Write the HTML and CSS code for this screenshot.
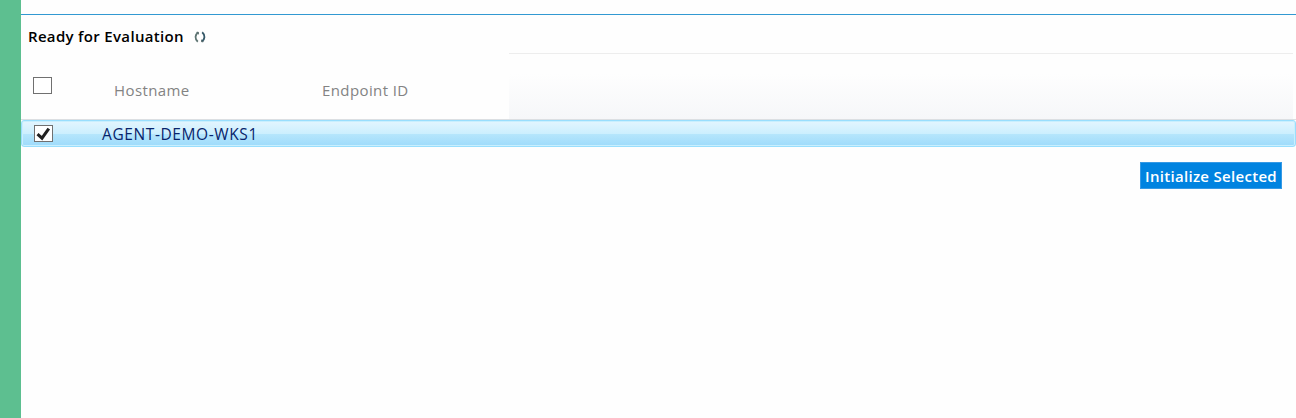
FILE: index.html
```html
<!DOCTYPE html>
<html lang="en">
<head>
<meta charset="utf-8">
<title>Ready for Evaluation</title>
<link rel="stylesheet" href="styles.css">
</head>
<body>
<div class="sidebar"></div>
<main class="panel">
  <header class="title-bar">
    <h1 class="title">Ready for Evaluation</h1>
    <svg class="refresh" width="12" height="12" viewBox="0 0 12 12" fill="none" stroke-width="1.8">
      <path d="M4.4 1.2C.7 3.6 .7 8 3.8 10.7" stroke="#5d7472"/>
      <path d="M7.6 10.8C11.3 8.4 11.3 4 8.2 1.3" stroke="#345868"/>
      <path d="M2.4 1.4h2v2M9.6 10.6h-2v-2" stroke="#5b6f70" stroke-width="1"/>
    </svg>
  </header>
  <section class="grid">
    <div class="grid-head">
      <span class="check"></span>
      <span class="col col-host">Hostname</span>
      <span class="col col-endpoint">Endpoint ID</span>
      <span class="filler"></span>
    </div>
    <div class="grid-row">
      <span class="check">
        <svg width="15" height="14" viewBox="0 0 15 14" fill="none" stroke="#212121" stroke-width="3"><path d="M1.5 7.2L6 11.2L12.8 1.6"/></svg>
      </span>
      <span class="host">AGENT-DEMO-WKS1</span>
    </div>
  </section>
  <footer class="actions"><button class="init">Initialize Selected</button></footer>
</main>
</body>
</html>
```
FILE: styles.css
```css
* { box-sizing: border-box; }
body {
  margin: 0;
  height: 418px;
  display: flex;
  overflow: hidden;
  background: #fefefe;
  font-family: "Open Sans", "Noto Sans", sans-serif;
  font-size: 15px;
}
.sidebar { width: 21px; flex: none; background: #5dbf90; }
.panel { flex: 1; min-width: 0; padding-top: 14px; }
.title-bar {
  height: 39px;
  border-top: 1px solid #3299d2;
  padding: 10px 0 0 7px;
  display: flex;
  align-items: flex-start;
}
.title {
  margin: 0;
  width: 166px;
  font-size: 15px;
  line-height: 22px;
  font-weight: 600;
  letter-spacing: 0.32px;
  white-space: nowrap;
  color: #000;
}
.refresh { margin-top: 6px; }
.grid-head {
  height: 67px;
  display: flex;
  padding: 0 3px 0 12px;
  border-bottom: 1px solid #dcdfe2;
  color: #838383;
}
.check {
  width: 19px;
  height: 17px;
  flex: none;
  border: 1px solid #707070;
  background: #fff;
  display: flex;
  align-items: center;
  justify-content: center;
}
.grid-head .check { margin-top: 24px; }
.col { line-height: 22px; padding-top: 26px; white-space: nowrap; letter-spacing: 0.4px; }
.col-host { width: 208px; margin-left: 62px; }
.col-endpoint { width: 187px; }
.filler {
  flex: 1;
  border-top: 1px solid #ededed;
  background: linear-gradient(#fefefe 30%, #f6f7f9);
}
.grid-row {
  height: 27px;
  display: flex;
  align-items: center;
  padding-left: 12px;
  border: 1px solid #99defd;
  border-radius: 3px;
  box-shadow: inset 0 0 0 1px #c9effe;
  background: linear-gradient(#e3f5fe, #cceffe 50%, #b6e6fc 51%, #9edbfb);
}
.host {
  margin-left: 49px;
  color: #08246b;
  font-size: 15.5px;
  line-height: 22px;
  letter-spacing: 0.6px;
  white-space: nowrap;
}
.actions { display: flex; justify-content: flex-end; padding: 15px 14px 0 0; }
.init {
  width: 142px;
  height: 27px;
  padding: 0;
  border: 1px solid #3599e5;
  background: #0083e0;
  color: #fff;
  font: 600 15px/22px "Open Sans", "Noto Sans", sans-serif;
  letter-spacing: 0.3px;
  white-space: nowrap;
}
```
